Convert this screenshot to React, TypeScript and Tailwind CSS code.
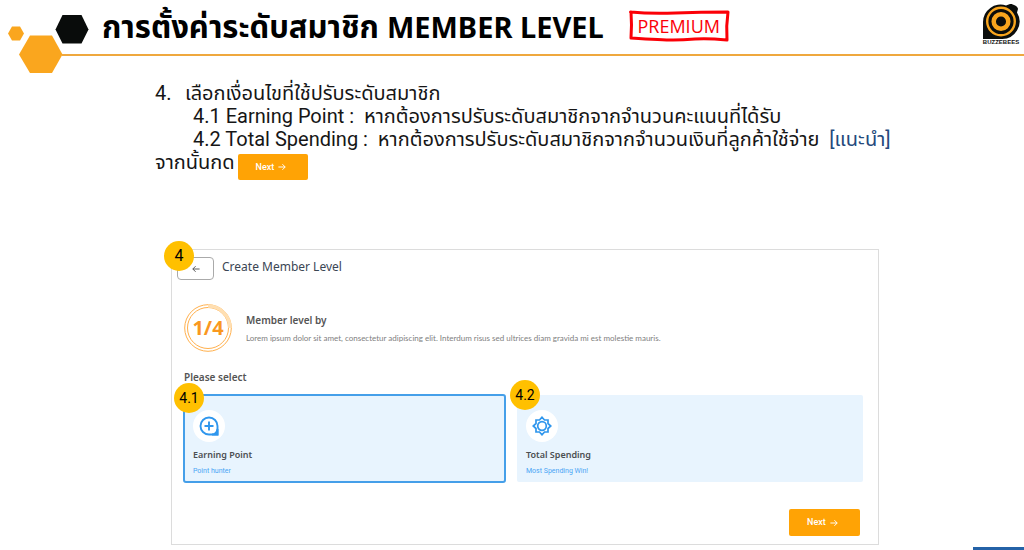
import type { ReactNode } from "react";

function ArrowIcon({ className, back = false }: { className: string; back?: boolean }) {
  return (
    <svg viewBox="0 0 10 10" className={className} fill="none" stroke="currentColor" strokeWidth="1.2" aria-hidden="true">
      <path d={back ? "M9.5 5H1M4.5 1.5 1 5l3.5 3.5" : "M.5 5H9M5.5 1.5 9 5 5.5 8.5"} />
    </svg>
  );
}

function NextButton({ className }: { className: string }) {
  return (
    <button type="button" className={`flex items-center gap-1 rounded-xs bg-[#ffa305] font-['Roboto',sans-serif] text-[9px] font-medium text-white ${className}`}>
      Next <ArrowIcon className="size-2" />
    </button>
  );
}

function Marker({ children, className }: { children: ReactNode; className: string }) {
  return (
    <span className={`absolute z-10 flex size-[30px] items-center justify-center rounded-full bg-[#ffc000] font-['Roboto',sans-serif] text-black ${className}`}>
      {children}
    </span>
  );
}

function Hexagons() {
  return (
    <svg viewBox="0 0 62 76" className="h-[76px] w-[62px] shrink-0 overflow-visible" aria-hidden="true">
      <path d="M8 33.5 12 26.5h8l4 7-4 7h-8z" fill="#faa61e" />
      <path d="M55.500 29.500 62.500 15h19L88.500 29.500 81.500 43.500h-19z" fill="#090c0b" />
      <path d="M19 54.500 30 35.500h22L62.500 54.500 52 73H30z" fill="#faa61e" />
    </svg>
  );
}

function Logo() {
  return (
    <svg viewBox="0 0 40 44" className="h-11 w-10 shrink-0" role="img" aria-label="Buzzebees">
      <path d="M2 19A17.500 17.500 0 0 1 25 2.500l4-1.500C31 .5 37 3 37 6l-1 3.500A17.500 17.500 0 0 1 20 36H2z" fill="#0b0d0c" />
      <circle cx="20" cy="18.500" r="13.800" fill="none" stroke="#f9a51d" strokeWidth="2.400" />
      <circle cx="20" cy="18.500" r="7.300" fill="none" stroke="#f9a51d" strokeWidth="4.500" />
      <text x="20" y="41" textAnchor="middle" fontFamily="Liberation Sans, sans-serif" fontWeight="700" fontSize="6" fill="#111">BUZZEBEES</text>
    </svg>
  );
}

function PointIcon() {
  return (
    <svg viewBox="0 0 20 20" className="size-5" fill="none" stroke="#2f96ed" strokeWidth="1.900" aria-hidden="true">
      <path d="M10 1.500a8.500 8.500 0 1 0 0 17h8.500V10A8.500 8.500 0 0 0 10 1.500zM10 5.500v9M5.500 10h9" />
      <path d="M18.500 13v5.500H13c3 0 5-2.500 5.500-5.500z" fill="#2f96ed" />
    </svg>
  );
}

function SpendingIcon() {
  return (
    <svg viewBox="0 0 20 20" className="size-5" fill="none" stroke="#2f96ed" strokeWidth="1.700" strokeLinejoin="miter" aria-hidden="true">
      <path d="M10 1.200 12.500 4H16v3.500L18.800 10 16 12.500V16h-3.500L10 18.800 7.500 16H4v-3.500L1.200 10 4 7.500V4h3.500z" />
      <circle cx="10" cy="10" r="4.300" />
    </svg>
  );
}

function Option({ icon, title, note, selected = false }: { icon: ReactNode; title: string; note: string; selected?: boolean }) {
  return (
    <button
      type="button"
      aria-pressed={selected}
      className={`flex w-full flex-col items-start bg-[#e8f4fe] text-left ${selected ? "rounded-[3px] border-2 border-[#459fe9] pt-[14px] pb-[5px] pl-2" : "my-px rounded-xs pt-[15px] pb-[6px] pl-[9px]"}`}
    >
      <span className="flex size-8 items-center justify-center rounded-full bg-white">{icon}</span>
      <span className="mt-[6px] text-[9px] leading-[14px] font-semibold text-[#4c4f52]">{title}</span>
      <span className="mt-1 font-['Roboto',sans-serif] text-[7px] leading-[10px] text-[#48a5f5]">{note}</span>
    </button>
  );
}

export default function App() {
  return (
    <div className="flex min-h-screen flex-col bg-white font-['Noto_Sans','Noto_Sans_Thai',sans-serif]">
      <header className="flex items-start">
        <Hexagons />
        <div className="flex h-14 flex-1 items-start border-b-2 border-[#efa83e] pl-10">
          <h1 className="flex items-baseline gap-2 pt-1 text-[31px] leading-[44px] font-bold whitespace-nowrap text-black">
            <span>การตั้งค่าระดับสมาชิก</span>
            <span className="text-[29px]">MEMBER LEVEL</span>
          </h1>
          <div className="relative mt-[10px] ml-6 flex h-8 w-[102px] items-center justify-center">
            <svg viewBox="0 0 102 32" className="absolute inset-0 size-full" fill="none" stroke="#fb0007" strokeWidth="3" strokeLinejoin="round" aria-hidden="true">
              <path d="M2.500 2q20 2 45 1T100 2q-2 14-1 28-20-2-32-1t-22 1-42-2q1-13 0-26z" />
            </svg>
            <span className="font-['Open_Sans',sans-serif] text-[18px] leading-6 text-[#fb0007]">PREMIUM</span>
          </div>
          <div className="mt-[3px] mr-[3px] ml-auto"><Logo /></div>
        </div>
      </header>

      <main className="flex-1 pr-[145px] pl-[155px]">
        <section className="mt-[6px] font-['Roboto','Noto_Sans_Thai',sans-serif] text-[20px] leading-[23px] whitespace-nowrap text-[#161616]">
          <div className="flex"><span className="w-[30px]">4.</span><p>เลือกเงื่อนไขที่ใช้ปรับระดับสมาชิก</p></div>
          <p className="pl-[38px]">4.1 Earning Point :&nbsp; หากต้องการปรับระดับสมาชิกจากจำนวนคะแนนที่ได้รับ</p>
          <p className="pl-[38px]">4.2 Total Spending :&nbsp; หากต้องการปรับระดับสมาชิกจากจำนวนเงินที่ลูกค้าใช้จ่าย&nbsp; <span className="text-[#254a7c]">[แนะนำ]</span></p>
          <div className="flex items-start gap-[3px]"><p>จากนั้นกด</p><NextButton className="mt-[3px] h-[26px] w-[70px] pl-[18px]" /></div>
        </section>

        <section className="relative mt-[69px] ml-4 border border-[#dcdcdc] pt-[7px] pr-[15px] pb-2 pl-[11px]">
          <Marker className="-top-[9px] -left-2 text-[16px]">4</Marker>
          <div className="-ml-[6px] flex items-start gap-2">
            <button type="button" aria-label="Back" className="flex h-[23px] w-[37px] items-center justify-center rounded border border-[#aaaaaa] text-[#555555]">
              <ArrowIcon back className="size-2" />
            </button>
            <h2 className="text-[12px] leading-5 text-[#3b4654]">Create Member Level</h2>
          </div>

          <div className="mt-6 flex items-center gap-[14px] pl-px">
            <div className="relative size-12">
              <svg viewBox="0 0 48 48" className="absolute inset-0 size-full" fill="none" stroke="#ffb04d" aria-hidden="true">
                <circle cx="24" cy="24" r="23.300" strokeWidth="1" />
                <circle cx="24" cy="24" r="20.500" strokeWidth="1" />
                <path d="M24 2a22 22 0 0 1 22 22" stroke="#ffdfb2" strokeWidth="3.500" />
              </svg>
              <span className="relative flex size-full items-center justify-center text-[20px] font-bold text-[#f9981f]">1/4</span>
            </div>
            <div>
              <h3 className="text-[10px] leading-4 font-semibold text-[#555555]">Member level by</h3>
              <p className="mt-[3px] font-['Lato',sans-serif] text-[8px] leading-[14px] text-[#808080]">Lorem ipsum dolor sit amet, consectetur adipiscing elit. Interdum risus sed ultrices diam gravida mi est molestie mauris.</p>
            </div>
          </div>

          <h3 className="mt-4 pl-px text-[10px] leading-[18px] font-semibold text-[#555555]">Please select</h3>
          <div className="mt-2 grid grid-cols-[323fr_346fr] gap-[11px]">
            <div className="relative">
              <Marker className="-top-[11px] -left-[9px] text-[14px]">4.1</Marker>
              <Option selected icon={<PointIcon />} title="Earning Point" note="Point hunter" />
            </div>
            <div className="relative">
              <Marker className="-top-[14px] -left-[7px] text-[14px]">4.2</Marker>
              <Option icon={<SpendingIcon />} title="Total Spending" note="Most Spending Win!" />
            </div>
          </div>
          <div className="mt-[26px] flex justify-end pr-[3px]">
            <NextButton className="h-[27px] w-[71px] pl-[18px]" />
          </div>
        </section>
      </main>
      <div className="h-[3px] w-[51px] self-end bg-[#2462a7]" />
    </div>
  );
}
